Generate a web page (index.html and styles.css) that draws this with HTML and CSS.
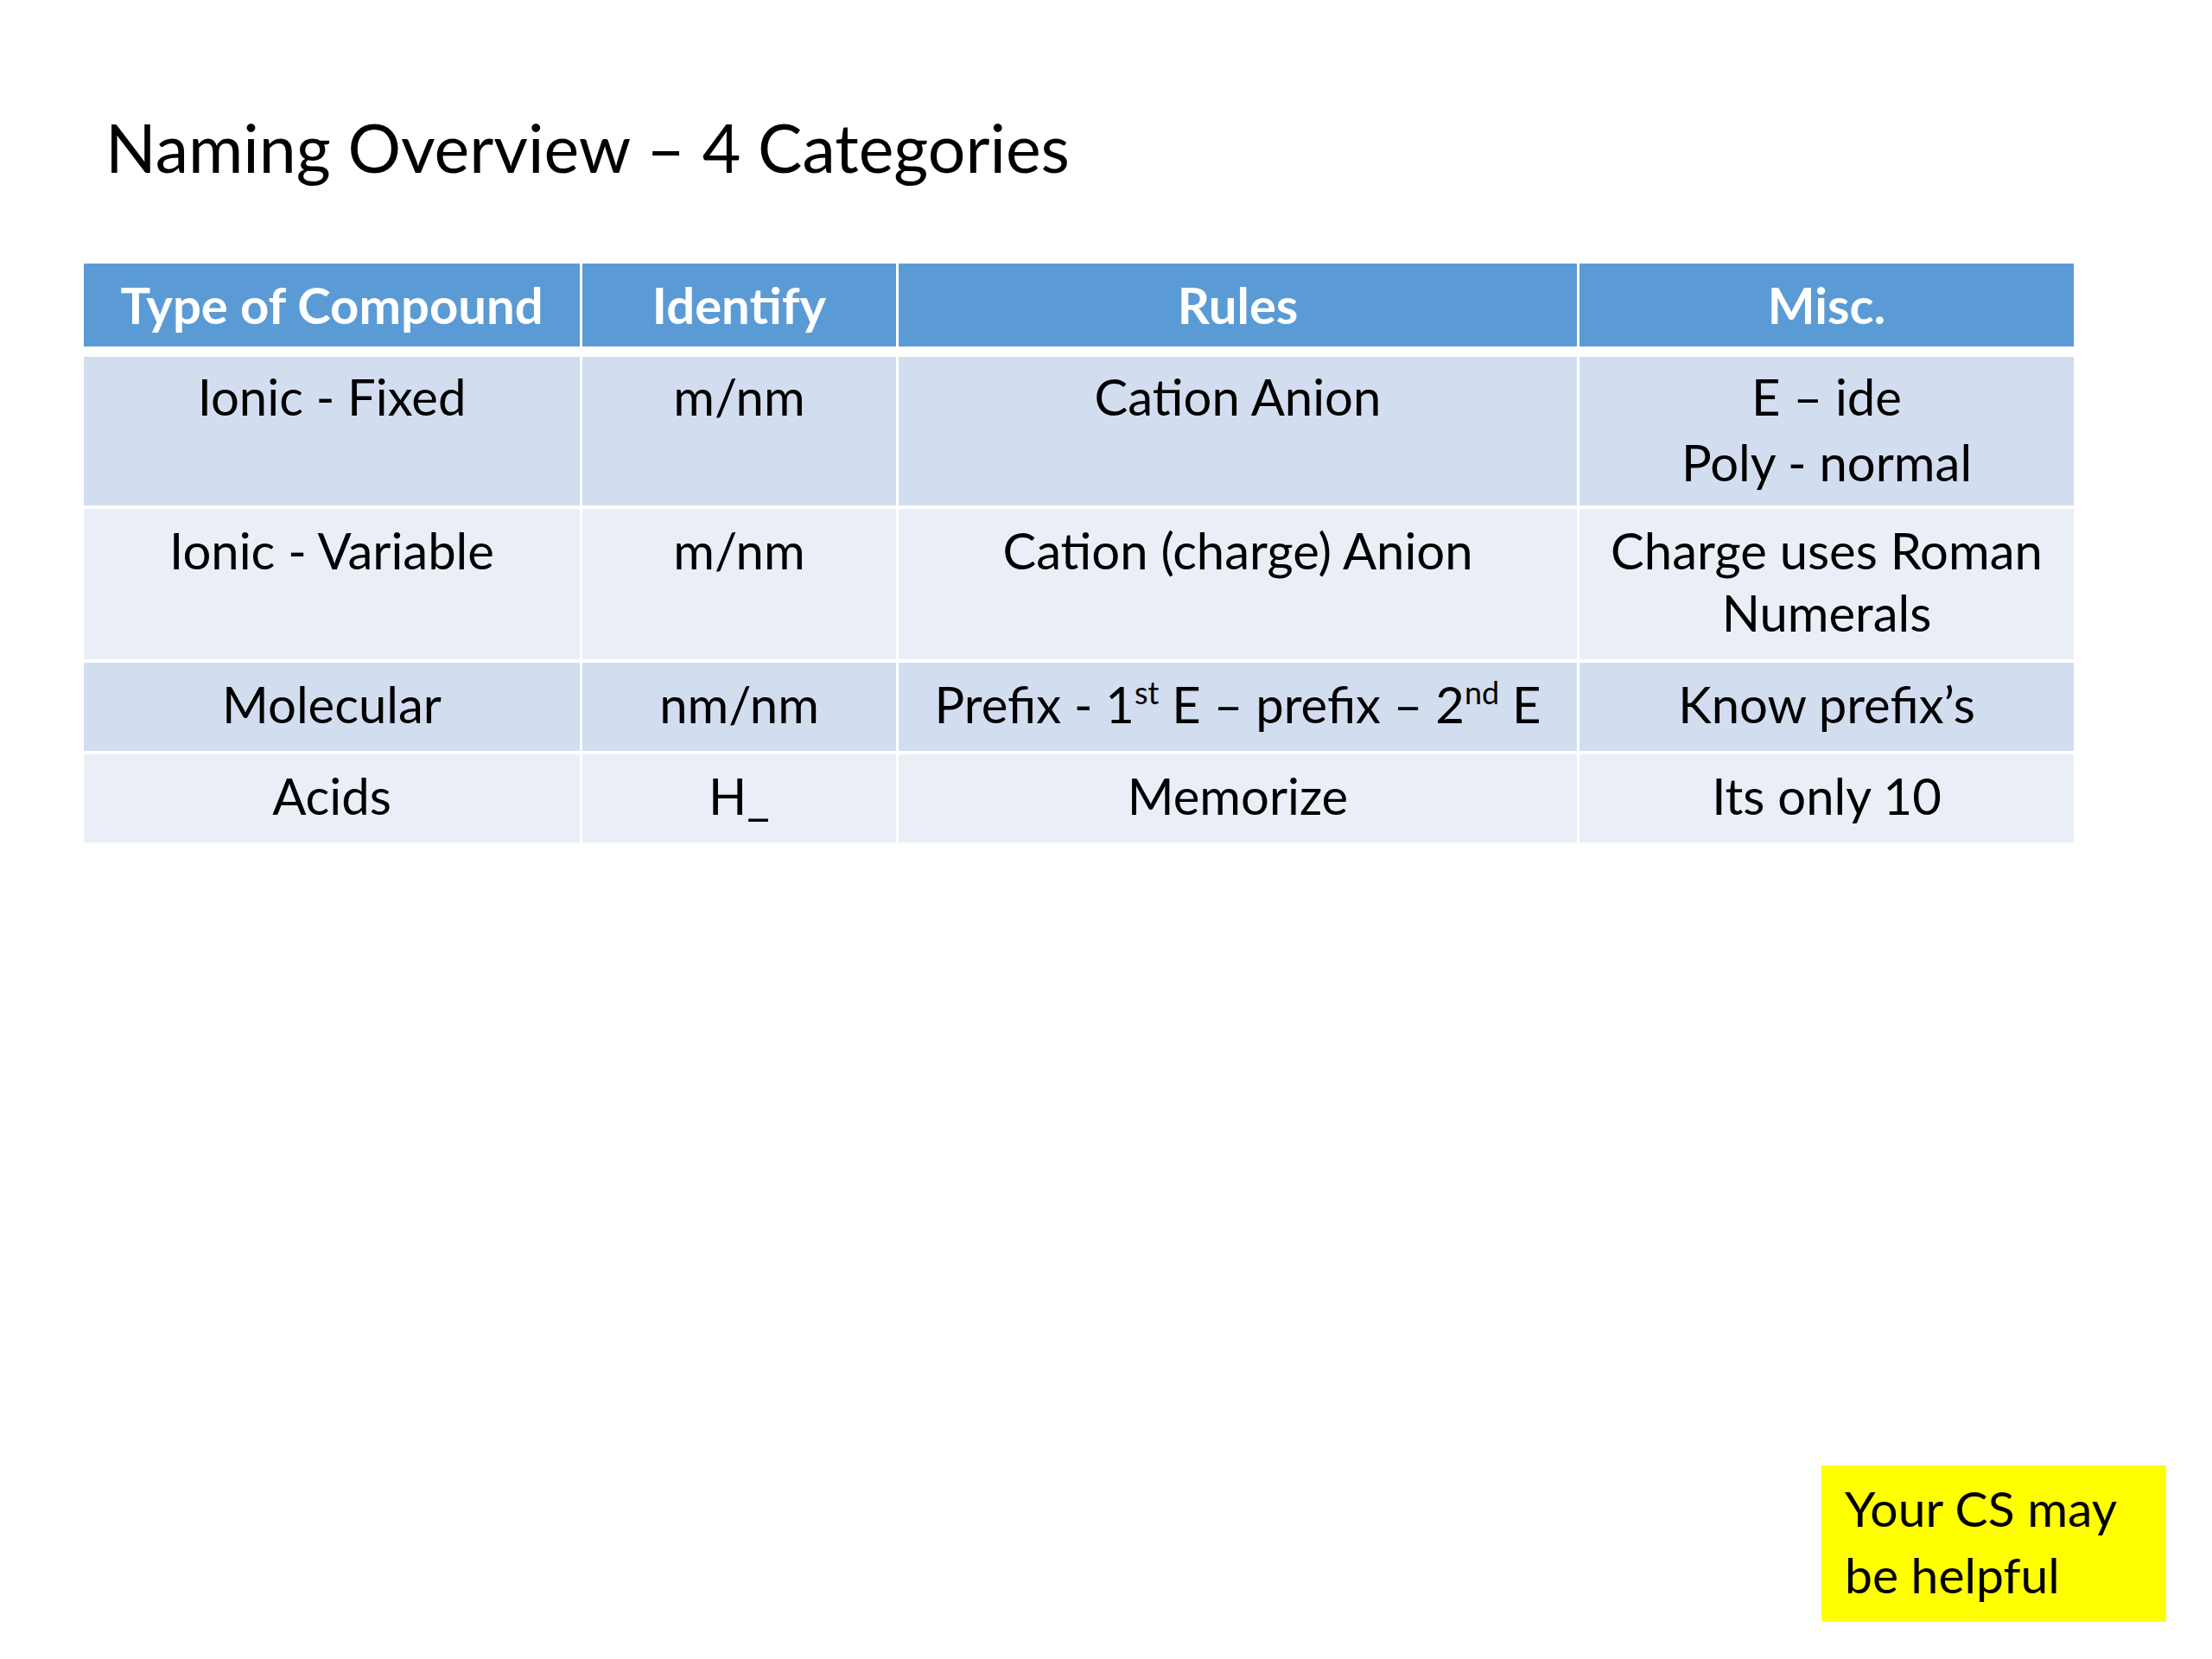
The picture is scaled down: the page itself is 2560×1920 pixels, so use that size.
FILE: index.html
```html
<!DOCTYPE html>
<html lang="en">
<head>
<meta charset="utf-8">
<title>Naming Overview – 4 Categories</title>
<link rel="stylesheet" href="styles.css">
</head>
<body>
<div class="slide">
  <h1 class="title">Naming Overview – 4 Categories</h1>
  <table class="grid">
    <colgroup>
      <col class="c1"><col class="c2"><col class="c3"><col class="c4">
    </colgroup>
    <thead>
      <tr>
        <th>Type of Compound</th>
        <th>Identify</th>
        <th>Rules</th>
        <th>Misc.</th>
      </tr>
    </thead>
    <tbody>
      <tr class="band1 first">
        <td>Ionic - Fixed</td>
        <td>m/nm</td>
        <td>Cation Anion</td>
        <td>E – ide<br>Poly - normal</td>
      </tr>
      <tr class="band2">
        <td>Ionic - Variable</td>
        <td>m/nm</td>
        <td>Cation (charge) Anion</td>
        <td>Charge uses Roman<br>Numerals</td>
      </tr>
      <tr class="band1">
        <td>Molecular</td>
        <td>nm/nm</td>
        <td>Prefix - 1<sup>st</sup> E – prefix – 2<sup>nd</sup> E</td>
        <td>Know prefix’s</td>
      </tr>
      <tr class="band2">
        <td>Acids</td>
        <td>H_</td>
        <td>Memorize</td>
        <td>Its only 10</td>
      </tr>
    </tbody>
  </table>
  <div class="note">Your CS may<br>be helpful</div>
</div>
</body>
</html>
```

FILE: styles.css
```css
html, body {
  margin: 0;
  padding: 0;
  background: #ffffff;
}
body {
  font-family: Lato, "Open Sans", "Liberation Sans", sans-serif;
  color: #000;
}
.slide {
  position: relative;
  width: 2560px;
  height: 1920px;
  overflow: hidden;
}
.title {
  margin: 0;
  padding: 124px 0 0 122px;
  font-weight: 400;
  font-size: 77px;
  line-height: 92px;
  height: 92px;
}
.grid {
  margin: 89px 0 0 97px;
  border-collapse: separate;
  border-spacing: 0;
  table-layout: fixed;
  width: 2303px;
}
.c1 { width: 574px; }
.c2 { width: 366px; }
.c3 { width: 788px; }
.c4 { width: 575px; }
.grid th,
.grid td {
  text-align: center;
  vertical-align: top;
  font-size: 58px;
  line-height: 72px;
  padding: 0;
}
.grid th + th,
.grid td + td {
  border-left: 3px solid #ffffff;
}
.grid th {
  background: #5b9bd5;
  color: #ffffff;
  font-weight: 700;
  padding: 12px 0 12px 0;
}
.grid td {
  padding: 12px 0 18px 0;
  border-top: 4px solid #ffffff;
}
.grid tr.first td {
  border-top: 12px solid #ffffff;
  padding-top: 10px;
}
.grid tr.first td:last-child {
  line-height: 76px;
  padding-bottom: 12px;
  padding-top: 8px;
}
.band1 td { background: #d2deef; }
.band2 td { background: #eaeff7; }
.grid sup {
  font-size: 0.62em;
  line-height: 0;
  vertical-align: 0.62em;
}
.note {
  position: absolute;
  left: 2108px;
  top: 1696px;
  width: 399px;
  height: 181px;
  box-sizing: border-box;
  padding: 11px 0 0 27px;
  background: #ffff00;
  font-size: 57px;
  line-height: 77px;
}
```
